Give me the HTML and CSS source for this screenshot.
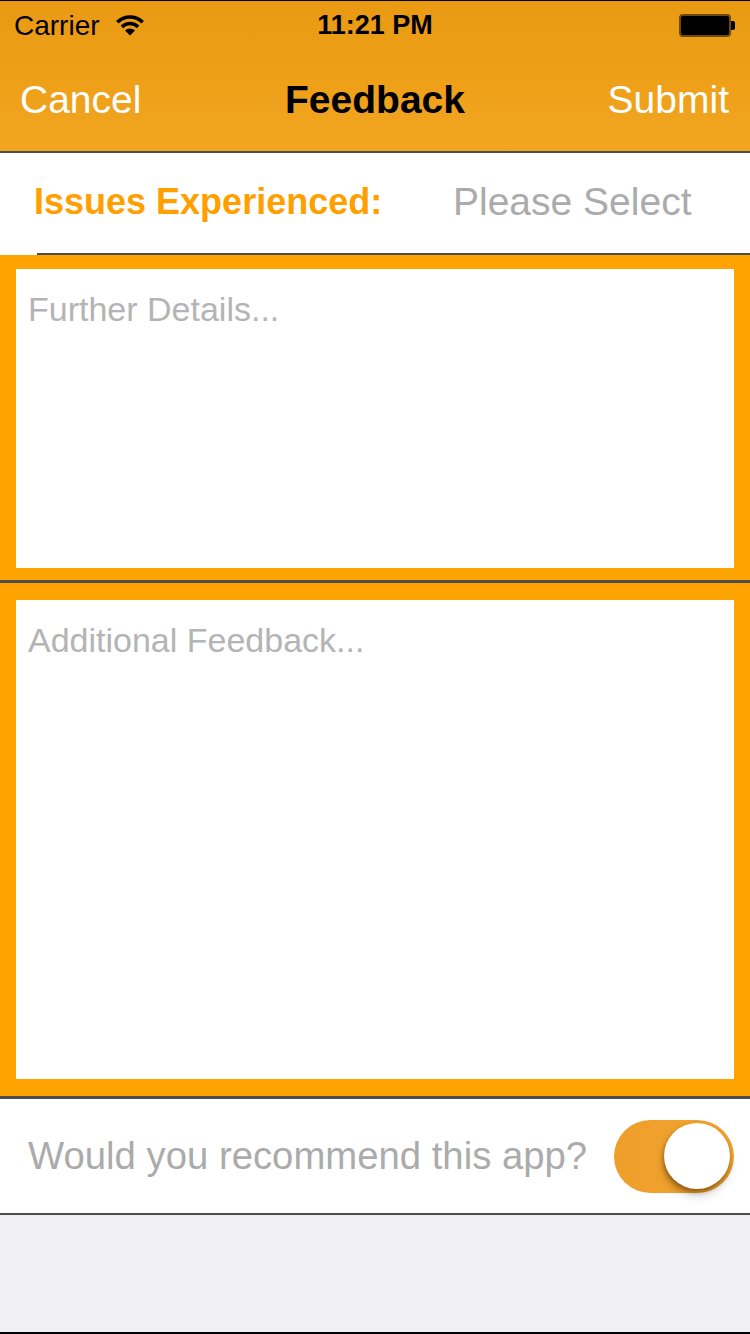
FILE: index.html
```html
<!DOCTYPE html>
<html>
<head>
<meta charset="utf-8">
<link rel="stylesheet" href="styles.css">
</head>
<body>
<div class="screen">
  <header class="header">
    <div class="status">
      <div class="status-left">
        <span class="carrier">Carrier</span>
        <svg class="wifi" width="32" height="24" viewBox="0 0 32 24">
          <path d="M3.3 9.3 A18 18 0 0 1 28.7 9.3" fill="none" stroke="#000" stroke-width="3.6"/>
          <path d="M7.9 13.9 A11.5 11.5 0 0 1 24.1 13.9" fill="none" stroke="#000" stroke-width="3.6"/>
          <path d="M16 22.5 L11 17.5 A7 7 0 0 1 21 17.5 Z" fill="#000"/>
        </svg>
      </div>
      <span class="time">11:21 PM</span>
      <div class="battery">
        <div class="battery-body"></div>
        <div class="battery-nub"></div>
      </div>
    </div>
    <nav class="navbar">
      <span class="nav-btn">Cancel</span>
      <span class="nav-title">Feedback</span>
      <span class="nav-btn">Submit</span>
    </nav>
  </header>
  <div class="issues-row">
    <div class="issues-inner">
      <span class="issues-label">Issues Experienced:</span>
      <span class="issues-value">Please Select</span>
    </div>
  </div>
  <div class="box box-details">
    <div class="box-field box-field-details">Further Details...</div>
  </div>
  <div class="box box-feedback">
    <div class="box-field box-field-feedback">Additional Feedback...</div>
  </div>
  <div class="recommend-row">
    <span class="recommend-label">Would you recommend this app?</span>
    <div class="toggle"><div class="knob"></div></div>
  </div>
  <div class="footer-space"></div>
</div>
</body>
</html>
```

FILE: styles.css
```css
* { box-sizing: border-box; }
html, body {
  margin: 0;
  padding: 0;
  width: 750px;
  height: 1334px;
  overflow: hidden;
  font-family: "Liberation Sans", Arial, sans-serif;
}
.screen {
  width: 750px;
  height: 1334px;
  display: flex;
  flex-direction: column;
  background: #efeff4;
}
.header {
  height: 153px;
  flex: 0 0 auto;
  background: linear-gradient(#e99a12, #f2a51f);
  border-top: 1px solid #000;
  border-bottom: 2px solid #4d4d4d;
  display: flex;
  flex-direction: column;
}
.status {
  height: 49px;
  display: flex;
  align-items: center;
  justify-content: space-between;
  padding: 0 15px 0 14px;
  position: relative;
}
.status-left {
  display: flex;
  align-items: center;
  gap: 14px;
}
.carrier {
  font-size: 28px;
  color: #000;
}
.wifi { display: block; margin-top: -2px; }
.time {
  font-size: 27px;
  font-weight: bold;
  color: #000;
  position: absolute;
  left: 0;
  right: 0;
  text-align: center;
  pointer-events: none;
}
.battery {
  display: flex;
  align-items: center;
}
.battery-body {
  width: 52px;
  height: 23px;
  background: #000;
  border: 2px solid #6b4a0e;
  border-radius: 4px;
}
.battery-nub {
  width: 4px;
  height: 9px;
  background: #000;
  border-radius: 0 2px 2px 0;
}
.navbar {
  flex: 1;
  display: flex;
  align-items: center;
  justify-content: space-between;
  padding: 0 21px 2px 20px;
}
.nav-btn {
  font-size: 39px;
  color: #fff;
}
.nav-title {
  font-size: 39px;
  font-weight: bold;
  color: #000;
  margin-left: 1px;
}
.issues-row {
  height: 102px;
  flex: 0 0 auto;
  background: #fff;
  padding-left: 37px;
}
.issues-inner {
  height: 102px;
  border-bottom: 2px solid #4d4d4d;
  display: flex;
  align-items: center;
  padding-bottom: 2px;
}
.issues-label {
  font-size: 36px;
  font-weight: bold;
  color: #ffa000;
  margin-left: -3px;
  width: 419px;
}
.issues-value {
  font-size: 39px;
  color: #ababab;
}
.box {
  flex: 0 0 auto;
  background: #ffa300;
  padding: 0 16px;
  border-bottom: 3px solid #4d4d4d;
}
.box-details {
  padding-top: 14px;
  padding-bottom: 12px;
}
.box-feedback {
  padding-top: 17px;
  padding-bottom: 17px;
}
.box-field {
  background: #fff;
  color: #b4b4b4;
  font-size: 34px;
  padding: 21px 12px 0;
}
.box-field-details { height: 299px; }
.box-field-feedback { height: 479px; }
.recommend-row {
  height: 116px;
  flex: 0 0 auto;
  background: #fff;
  border-bottom: 2px solid #4d4d4d;
  display: flex;
  align-items: center;
  justify-content: space-between;
  padding: 0 16px 0 28px;
}
.recommend-label {
  font-size: 38.3px;
  color: #ababab;
}
.toggle {
  width: 120px;
  height: 73px;
  border-radius: 37px;
  background: linear-gradient(90deg, #ee9f2a, #f1a431);
  display: flex;
  align-items: center;
  justify-content: flex-end;
  padding: 0 4px;
}
.knob {
  width: 66px;
  height: 66px;
  border-radius: 50%;
  background: #fff;
  box-shadow: -1px 3px 5px rgba(90, 50, 0, 0.55), 0 8px 10px rgba(0, 0, 0, 0.12);
}
.footer-space {
  flex: 1;
  background: #efeff4;
  border-bottom: 2px solid #000;
}
```
